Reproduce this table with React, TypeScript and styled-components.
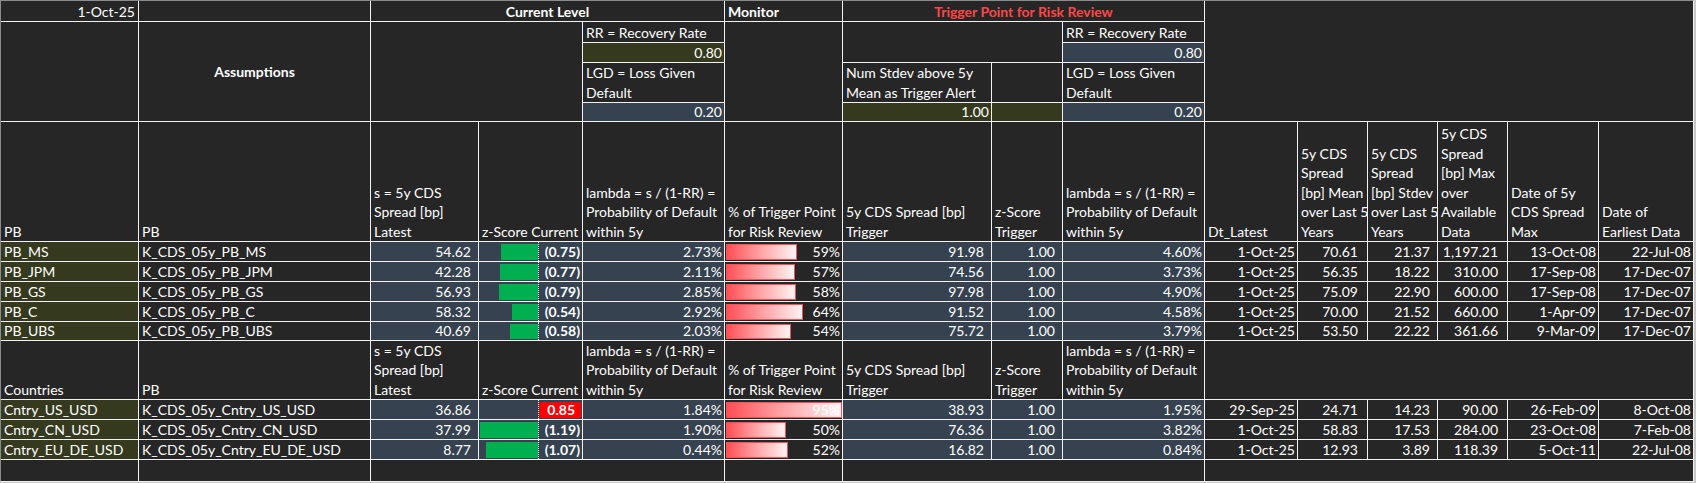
import React from "react";
import styled, { createGlobalStyle } from "styled-components";

const Global = createGlobalStyle`
  html, body { margin: 0; padding: 0; background: #c8c8c8; }
  body { font-family: Lato, "Liberation Sans", Arial, sans-serif; }
`;

const COLS = [137, 231, 107, 103, 141, 117, 148, 70, 141, 92, 69, 69, 69, 90, 94];
const ROWS = [20, 20, 19, 39, 18, 119, 19, 19, 19, 19, 18, 58, 19, 19, 19, 21];

const FILLS = { dark: "#262626", olive: "#353a1f", slate: "#36424f" } as const;
type Fill = keyof typeof FILLS;

const Sheet = styled.div`
  display: grid;
  grid-template-columns: ${COLS.map((c) => `${c}px`).join(" ")};
  grid-template-rows: ${ROWS.map((r) => `${r}px`).join(" ")};
  gap: 1px;
  width: max-content;
  background: #f2f2f2;
  border: 1px solid #f2f2f2;
  border-top-color: #8c8c8c;
  border-left-color: #8c8c8c;
  font-family: Lato, "Liberation Sans", Arial, sans-serif;
  font-size: 14px;
  color: #ffffff;
`;

type CellProps = {
  $c: number;
  $cs?: number;
  $r: number;
  $rs?: number;
  $fill?: Fill;
  $align?: "left" | "right" | "center";
  $valign?: "center" | "bottom";
  $bold?: boolean;
  $pr?: number;
  $tone?: string;
};

const Cell = styled.div<CellProps>`
  grid-column: ${(p) => `${p.$c} / span ${p.$cs ?? 1}`};
  grid-row: ${(p) => `${p.$r} / span ${p.$rs ?? 1}`};
  background: ${(p) => FILLS[p.$fill ?? "dark"]};
  display: flex;
  flex-direction: column;
  justify-content: ${(p) => (p.$valign === "center" ? "center" : "flex-end")};
  text-align: ${(p) => p.$align ?? "left"};
  padding: 0 ${(p) => p.$pr ?? 3}px 0 3px;
  font-weight: ${(p) => (p.$bold ? 700 : 400)};
  color: ${(p) => p.$tone ?? "#ffffff"};
  line-height: 19.5px;
  white-space: pre;
  overflow: hidden;
  position: relative;
  min-width: 0;
`;

const Layer = styled.span`
  position: relative;
  z-index: 1;
`;

const ZAxis = styled.span`
  position: absolute;
  top: 0;
  bottom: 0;
  left: 59px;
  border-left: 1px dotted #ffffff;
`;

const ZBar = styled.span<{ $neg: boolean }>`
  position: absolute;
  top: 2px;
  bottom: 1px;
  background: ${(p) => (p.$neg ? "#00b050" : "#ff0000")};
`;

const PctBar = styled.span`
  position: absolute;
  left: 1px;
  top: 2px;
  bottom: 1px;
  box-sizing: border-box;
  border: 1px solid #ff4f55;
  background: linear-gradient(90deg, #ff4f55 0%, #ff9da0 45%, #fff4f4 100%);
`;

type Entry = {
  name: string;
  key: string;
  s: string;
  z: number;
  pd: string;
  pct: number;
  trig: string;
  zt: string;
  pdt: string;
  dt: string;
  mean: string;
  sd: string;
  max: string;
  maxDt: string;
  first: string;
};

const BANKS: Entry[] = [
  { name: "PB_MS", key: "K_CDS_05y_PB_MS", s: "54.62", z: -0.75, pd: "2.73%", pct: 59, trig: "91.98", zt: "1.00", pdt: "4.60%", dt: "1-Oct-25", mean: "70.61", sd: "21.37", max: "1,197.21", maxDt: "13-Oct-08", first: "22-Jul-08" },
  { name: "PB_JPM", key: "K_CDS_05y_PB_JPM", s: "42.28", z: -0.77, pd: "2.11%", pct: 57, trig: "74.56", zt: "1.00", pdt: "3.73%", dt: "1-Oct-25", mean: "56.35", sd: "18.22", max: "310.00", maxDt: "17-Sep-08", first: "17-Dec-07" },
  { name: "PB_GS", key: "K_CDS_05y_PB_GS", s: "56.93", z: -0.79, pd: "2.85%", pct: 58, trig: "97.98", zt: "1.00", pdt: "4.90%", dt: "1-Oct-25", mean: "75.09", sd: "22.90", max: "600.00", maxDt: "17-Sep-08", first: "17-Dec-07" },
  { name: "PB_C", key: "K_CDS_05y_PB_C", s: "58.32", z: -0.54, pd: "2.92%", pct: 64, trig: "91.52", zt: "1.00", pdt: "4.58%", dt: "1-Oct-25", mean: "70.00", sd: "21.52", max: "660.00", maxDt: "1-Apr-09", first: "17-Dec-07" },
  { name: "PB_UBS", key: "K_CDS_05y_PB_UBS", s: "40.69", z: -0.58, pd: "2.03%", pct: 54, trig: "75.72", zt: "1.00", pdt: "3.79%", dt: "1-Oct-25", mean: "53.50", sd: "22.22", max: "361.66", maxDt: "9-Mar-09", first: "17-Dec-07" },
];

const COUNTRIES: Entry[] = [
  { name: "Cntry_US_USD", key: "K_CDS_05y_Cntry_US_USD", s: "36.86", z: 0.85, pd: "1.84%", pct: 95, trig: "38.93", zt: "1.00", pdt: "1.95%", dt: "29-Sep-25", mean: "24.71", sd: "14.23", max: "90.00", maxDt: "26-Feb-09", first: "8-Oct-08" },
  { name: "Cntry_CN_USD", key: "K_CDS_05y_Cntry_CN_USD", s: "37.99", z: -1.19, pd: "1.90%", pct: 50, trig: "76.36", zt: "1.00", pdt: "3.82%", dt: "1-Oct-25", mean: "58.83", sd: "17.53", max: "284.00", maxDt: "23-Oct-08", first: "7-Feb-08" },
  { name: "Cntry_EU_DE_USD", key: "K_CDS_05y_Cntry_EU_DE_USD", s: "8.77", z: -1.07, pd: "0.44%", pct: 52, trig: "16.82", zt: "1.00", pdt: "0.84%", dt: "1-Oct-25", mean: "12.93", sd: "3.89", max: "118.39", maxDt: "5-Oct-11", first: "22-Jul-08" },
];

const AXIS = 59;
const Z_SCALE = 49;

function DataRow({ r, e }: { r: number; e: Entry }) {
  const neg = e.z < 0;
  const len = Math.abs(e.z) * Z_SCALE;
  const zText = neg ? `(${Math.abs(e.z).toFixed(2)})` : e.z.toFixed(2);
  const barW = Math.min(116, 1.24 * e.pct - 2);
  return (
    <>
      <Cell $c={1} $r={r} $fill="olive">{e.name}</Cell>
      <Cell $c={2} $r={r}>{e.key}</Cell>
      <Cell $c={3} $r={r} $fill="slate" $align="right" $pr={7}>{e.s}</Cell>
      <Cell $c={4} $r={r} $fill="slate" $align="right" $pr={neg ? 2 : 7} $bold>
        <ZAxis />
        <ZBar $neg={neg} style={{ left: neg ? AXIS - len : AXIS + 1, width: len }} />
        <Layer>{zText}</Layer>
      </Cell>
      <Cell $c={5} $r={r} $fill="slate" $align="right" $pr={2}>{e.pd}</Cell>
      <Cell $c={6} $r={r} $align="right" $pr={2}>
        <PctBar style={{ width: barW }} />
        <Layer>{`${e.pct}%`}</Layer>
      </Cell>
      <Cell $c={7} $r={r} $fill="slate" $align="right" $pr={7}>{e.trig}</Cell>
      <Cell $c={8} $r={r} $fill="slate" $align="right" $pr={7}>{e.zt}</Cell>
      <Cell $c={9} $r={r} $fill="slate" $align="right" $pr={2}>{e.pdt}</Cell>
      <Cell $c={10} $r={r} $align="right" $pr={2}>{e.dt}</Cell>
      <Cell $c={11} $r={r} $align="right" $pr={9}>{e.mean}</Cell>
      <Cell $c={12} $r={r} $align="right" $pr={7}>{e.sd}</Cell>
      <Cell $c={13} $r={r} $align="right" $pr={9}>{e.max}</Cell>
      <Cell $c={14} $r={r} $align="right" $pr={2}>{e.maxDt}</Cell>
      <Cell $c={15} $r={r} $align="right" $pr={2}>{e.first}</Cell>
    </>
  );
}

const LAMBDA = "lambda = s / (1-RR) =\nProbability of Default\nwithin 5y";

function CoreHeader({ r, first }: { r: number; first: string }) {
  return (
    <>
      <Cell $c={1} $r={r}>{first}</Cell>
      <Cell $c={2} $r={r}>PB</Cell>
      <Cell $c={3} $r={r}>{"s = 5y CDS\nSpread [bp]\nLatest"}</Cell>
      <Cell $c={4} $r={r}>z-Score Current</Cell>
      <Cell $c={5} $r={r}>{LAMBDA}</Cell>
      <Cell $c={6} $r={r}>{"% of Trigger Point\nfor Risk Review"}</Cell>
      <Cell $c={7} $r={r}>{"5y CDS Spread [bp]\nTrigger"}</Cell>
      <Cell $c={8} $r={r}>{"z-Score\nTrigger"}</Cell>
      <Cell $c={9} $r={r}>{LAMBDA}</Cell>
    </>
  );
}

export default function App() {
  return (
    <>
      <Global />
      <Sheet>
        {/* Row 1: section titles */}
        <Cell $c={1} $r={1} $align="right" $pr={3}>1-Oct-25</Cell>
        <Cell $c={2} $r={1} />
        <Cell $c={3} $cs={3} $r={1} $align="center" $bold>Current Level</Cell>
        <Cell $c={6} $r={1} $bold>Monitor</Cell>
        <Cell $c={7} $cs={3} $r={1} $align="center" $bold $tone="#ff4747">Trigger Point for Risk Review</Cell>
        <Cell $c={10} $cs={6} $r={1} $rs={5} />

        {/* Rows 2-5: assumptions */}
        <Cell $c={1} $r={2} $rs={4} />
        <Cell $c={2} $r={2} $rs={4} $align="center" $valign="center" $bold>Assumptions</Cell>
        <Cell $c={3} $cs={2} $r={2} $rs={4} />
        <Cell $c={5} $r={2}>RR = Recovery Rate</Cell>
        <Cell $c={5} $r={3} $fill="olive" $align="right" $pr={2}>0.80</Cell>
        <Cell $c={5} $r={4}>{"LGD = Loss Given\nDefault"}</Cell>
        <Cell $c={5} $r={5} $fill="slate" $align="right" $pr={2}>0.20</Cell>
        <Cell $c={6} $r={2} $rs={4} />
        <Cell $c={7} $cs={2} $r={2} $rs={2} />
        <Cell $c={7} $r={4}>{"Num Stdev above 5y\nMean as Trigger Alert"}</Cell>
        <Cell $c={8} $r={4} />
        <Cell $c={7} $r={5} $fill="olive" $align="right" $pr={2}>1.00</Cell>
        <Cell $c={8} $r={5} $fill="olive" />
        <Cell $c={9} $r={2}>RR = Recovery Rate</Cell>
        <Cell $c={9} $r={3} $fill="slate" $align="right" $pr={2}>0.80</Cell>
        <Cell $c={9} $r={4}>{"LGD = Loss Given\nDefault"}</Cell>
        <Cell $c={9} $r={5} $fill="slate" $align="right" $pr={2}>0.20</Cell>

        {/* Row 6: bank header */}
        <CoreHeader r={6} first="PB" />
        <Cell $c={10} $r={6}>Dt_Latest</Cell>
        <Cell $c={11} $r={6}>{"5y CDS\nSpread\n[bp] Mean\nover Last 5\nYears"}</Cell>
        <Cell $c={12} $r={6}>{"5y CDS\nSpread\n[bp] Stdev\nover Last 5\nYears"}</Cell>
        <Cell $c={13} $r={6}>{"5y CDS\nSpread\n[bp] Max\nover\nAvailable\nData"}</Cell>
        <Cell $c={14} $r={6}>{"Date of 5y\nCDS Spread\nMax"}</Cell>
        <Cell $c={15} $r={6}>{"Date of\nEarliest Data"}</Cell>

        {BANKS.map((e, i) => (
          <DataRow key={e.name} r={7 + i} e={e} />
        ))}

        {/* Row 12: countries header */}
        <CoreHeader r={12} first="Countries" />
        <Cell $c={10} $cs={6} $r={12} />

        {COUNTRIES.map((e, i) => (
          <DataRow key={e.name} r={13 + i} e={e} />
        ))}

        {/* Row 16: closing row */}
        <Cell $c={1} $r={16} />
        <Cell $c={2} $r={16} />
        <Cell $c={3} $cs={3} $r={16} />
        <Cell $c={6} $r={16} />
        <Cell $c={7} $cs={3} $r={16} />
        <Cell $c={10} $cs={6} $r={16} />
      </Sheet>
    </>
  );
}
